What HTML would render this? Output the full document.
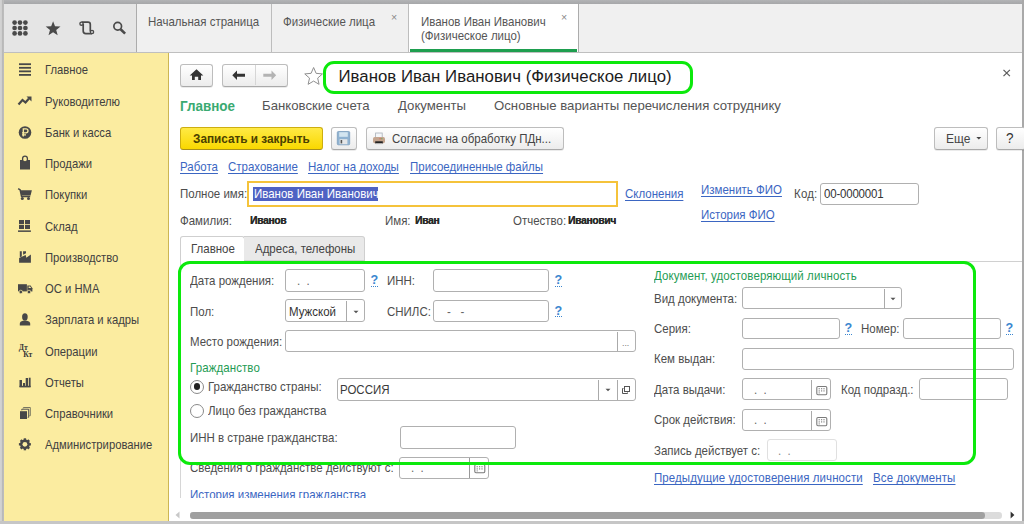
<!DOCTYPE html>
<html><head><meta charset="utf-8">
<style>
*{margin:0;padding:0;box-sizing:border-box}
html,body{width:1024px;height:524px;overflow:hidden;background:#b4b4b4;font-family:"Liberation Sans",sans-serif;color:#4d4d4d}
.a{position:absolute}
.t{position:absolute;white-space:nowrap;line-height:14px;font-size:11.9px;transform:scaleX(0.966);transform-origin:0 50%}
.sb{left:44.8px;color:#404040;font-size:12.1px;transform:scaleX(0.93)}
.btn{position:absolute;border:1px solid #bdbdbd;border-bottom-color:#a9a9a9;border-radius:3px;background:linear-gradient(#fff,#ececec);box-shadow:0 1px 0 rgba(0,0,0,0.08)}
.inp{position:absolute;border:1px solid #b0b0b0;border-radius:3px;background:#fff}
.nav{top:98.2px;font-size:13.2px;line-height:16px;color:#555;transform:none}
.lnk{color:#3b66c2;text-decoration:underline;text-underline-offset:1.6px}
.nm{top:213.3px;font-size:10.6px;font-weight:bold;color:#2a2a2a;letter-spacing:-0.3px;text-shadow:0.35px 0 0 #2a2a2a}
.q{color:#3b86cf;font-size:12.6px;font-weight:bold;line-height:14px;border-bottom:1px dotted #3b86cf;height:13.6px;transform:none}
#frame{position:absolute;left:3px;top:4px;width:1019px;height:517px;background:#fff;overflow:hidden}
</style></head><body>
<!-- outer borders -->
<div class="a" style="left:0;top:0;width:1024px;height:4px;background:linear-gradient(#b3b4b6,#a6a7a9)"></div>
<div class="a" style="left:0;top:0;width:4px;height:524px;background:linear-gradient(90deg,#d2d2d2 0,#d2d2d2 1.4px,#b9b9b9 2.2px,#b9b9b9 3.3px,#c4c4c4 4px)"></div>
<div class="a" style="left:1022px;top:0;width:2px;height:524px;background:#a9a9a9"></div>
<div class="a" style="left:0;top:521px;width:1024px;height:3px;background:#c6c6c6"></div>

<!-- header -->
<div class="a" style="left:4px;top:4px;width:133px;height:49px;background:#e5e5e5"></div>
<div class="a" style="left:136px;top:4px;width:1px;height:49px;background:#acacac"></div>
<div class="a" style="left:137px;top:4px;width:885px;height:49px;background:#f0f0f0"></div>
<div class="a" style="left:271px;top:4px;width:1px;height:49px;background:#bdbdbd"></div>
<div class="a" style="left:408px;top:4px;width:171px;height:49px;background:#fff;border-left:1px solid #bdbdbd;border-right:1px solid #acacac"></div>
<div class="a" style="left:409.5px;top:49px;width:167px;height:3px;background:#1e9e4f"></div>
<div class="a" style="left:4px;top:52px;width:1018px;height:1.3px;background:#bfbfbf"></div>

<div class="t" style="left:148px;top:15px;color:#555">Начальная страница</div>
<div class="t" style="left:283px;top:15px;color:#555">Физические лица</div>
<div class="t" style="left:391px;top:10px;color:#888;font-size:11px">×</div>
<div class="t" style="left:421px;top:15px;color:#555">Иванов Иван Иванович</div>
<div class="t" style="left:421px;top:29px;color:#555">(Физическое лицо)</div>
<div class="t" style="left:561px;top:10px;color:#888;font-size:11px">×</div>

<!-- sidebar -->
<div class="a" style="left:4px;top:53px;width:164px;height:468px;background:#fbeca0"></div>
<div class="a" style="left:168px;top:53px;width:1px;height:468px;background:#cdb653"></div>


<div class="t sb" style="top:63.40px">Главное</div>
<div class="t sb" style="top:94.65px">Руководителю</div>
<div class="t sb" style="top:125.90px">Банк и касса</div>
<div class="t sb" style="top:157.15px">Продажи</div>
<div class="t sb" style="top:188.40px">Покупки</div>
<div class="t sb" style="top:219.65px">Склад</div>
<div class="t sb" style="top:250.90px">Производство</div>
<div class="t sb" style="top:282.15px">ОС и НМА</div>
<div class="t sb" style="top:313.40px">Зарплата и кадры</div>
<div class="t sb" style="top:344.65px">Операции</div>
<div class="t sb" style="top:375.90px">Отчеты</div>
<div class="t sb" style="top:407.15px">Справочники</div>
<div class="t sb" style="top:438.40px">Администрирование</div>
<svg class="a" style="left:0;top:0" width="170" height="524" fill="#484848">
 <!-- hamburger -->
 <rect x="19" y="63.3" width="12" height="1.8"/><rect x="19" y="66.9" width="12" height="1.8"/><rect x="19" y="70.45" width="12" height="1.8"/><rect x="19" y="74" width="12" height="1.8"/>
 <!-- trend -->
 <path d="M18.5 104.5 L22.5 100 L25.5 102.5 L29 98.5" stroke="#484848" stroke-width="2.2" fill="none"/><path d="M26.5 96.5 L31.5 96.5 L31.5 101.5 Z"/>
 <!-- ruble -->
 <circle cx="25" cy="132.5" r="6.3"/>
 <path d="M23.3 136.5 V128.8 H26 A2 2 0 0 1 26 132.8 H22 M22 134.8 H26" stroke="#fbeca0" stroke-width="1.3" fill="none"/>
 <!-- bag -->
 <path d="M20 160 H22.4 L25 161.3 L27.6 160 H30 V169.4 H20 Z"/><path d="M22.6 161 V158.6 A2.4 2.4 0 0 1 27.4 158.6 V161" stroke="#484848" stroke-width="1.3" fill="none"/>
 <!-- cart -->
 <path d="M18.2 188.6 L20.2 190 L21.6 196.6 H30.2" stroke="#484848" stroke-width="1.5" fill="none"/><path d="M20.3 190.2 H31.9 L30.6 195.6 H21.3 Z"/><circle cx="22.3" cy="198.6" r="1.5"/><circle cx="28.5" cy="198.6" r="1.5"/>
 <!-- warehouse -->
 <rect x="19" y="220" width="5" height="4.2"/><rect x="25" y="220" width="5" height="4.2"/><rect x="19" y="225" width="5" height="4"/><rect x="25" y="225" width="5" height="4"/><rect x="18" y="230.4" width="12.9" height="1.5"/>
 <!-- factory -->
 <path d="M19.1 262.8 V258 L25.7 255 L26.3 257.8 L30.9 254.6 V262.8 Z"/><path d="M19.8 251.3 H21.8 V256.4 L19.8 257.3 Z"/><path d="M23.1 251.3 H26 V253.2 L23.1 254.7 Z"/>
 <!-- truck -->
 <path d="M18 284.2 H26.9 V291.4 H18 Z"/><path d="M27.3 285.4 H30.6 L32.4 288.2 V291.4 H27.3 Z"/><path d="M28.6 286.4 H30.1 L31.2 288 H28.6 Z" fill="#fbeca0"/><circle cx="20.8" cy="292" r="1.8" stroke="#fbeca0" stroke-width="0.7"/><circle cx="29" cy="292" r="1.8" stroke="#fbeca0" stroke-width="0.7"/>
 <!-- person -->
 <ellipse cx="24.9" cy="317" rx="2.8" ry="3.7"/><path d="M19.8 325.6 V323.8 Q19.8 321.2 23 320.7 H26.8 Q30.2 321.2 30.2 323.8 V325.6 Z"/>
 <!-- Dt Kt -->
 <text x="18.8" y="350.4" font-family="Liberation Serif" font-size="7.6" font-weight="bold" fill="#383838">Дт</text><text x="23.3" y="357" font-family="Liberation Serif" font-size="7.6" font-weight="bold" fill="#383838">Кт</text>
 <!-- reports -->
 <rect x="19.5" y="380" width="2.5" height="7"/><rect x="23" y="383" width="2" height="4"/><rect x="25.7" y="378" width="2.3" height="9"/><rect x="28.8" y="377.7" width="1.8" height="9.3"/><rect x="19.5" y="385.8" width="11.1" height="1.6"/>
 <!-- catalog -->
 <rect x="20" y="411.2" width="7" height="7.8"/><path d="M21.8 410.3 V409.2 H28.7 V417.3 H27.7" stroke="#505050" stroke-width="1" fill="none"/><path d="M23.4 408.3 V407.5 H30.3 V415.7 H29.4" stroke="#6a6a5a" stroke-width="0.9" fill="none"/>
 <!-- gear -->
 <g transform="translate(24.9 444.3)"><circle r="3.7" fill="none" stroke="#484848" stroke-width="2.4"/>
 <rect x="-1.2" y="-6" width="2.4" height="12"/><rect x="-1.2" y="-6" width="2.4" height="12" transform="rotate(45)"/><rect x="-1.2" y="-6" width="2.4" height="12" transform="rotate(90)"/><rect x="-1.2" y="-6" width="2.4" height="12" transform="rotate(135)"/>
 <circle r="2.4" fill="#fbeca0"/></g>
</svg>

<!-- header icons -->
<svg class="a" style="left:0;top:0" width="140" height="52" fill="#4a4a4a">
 <g><circle cx="14.6" cy="22.6" r="2.35"/><circle cx="20" cy="22.6" r="2.35"/><circle cx="25.4" cy="22.6" r="2.35"/>
 <circle cx="14.6" cy="28" r="2.35"/><circle cx="20" cy="28" r="2.35"/><circle cx="25.4" cy="28" r="2.35"/>
 <circle cx="14.6" cy="33.4" r="2.35"/><circle cx="20" cy="33.4" r="2.35"/><circle cx="25.4" cy="33.4" r="2.35"/></g>
 <path d="M53.10 21.20 L55.03 26.35 L60.52 26.59 L56.22 30.01 L57.68 35.31 L53.10 32.28 L48.52 35.31 L49.98 30.01 L45.68 26.59 L51.17 26.35 Z"/>
 <path d="M81.5 22.1 H88 Q90.3 22.1 90.3 24.4 V31.5" stroke="#4a4a4a" stroke-width="1.7" fill="none"/>
 <path d="M83.2 23.7 V31 Q83.2 33.6 85.8 33.6 H92" stroke="#4a4a4a" stroke-width="1.7" fill="none"/>
 <circle cx="81.5" cy="23.7" r="1.6" fill="#e5e5e5" stroke="#4a4a4a" stroke-width="1.4"/>
 <circle cx="92" cy="32" r="1.6" fill="#e5e5e5" stroke="#4a4a4a" stroke-width="1.4"/>
 <circle cx="117.7" cy="26.3" r="3.85" fill="none" stroke="#4a4a4a" stroke-width="1.7"/><path d="M120.6 29.3 L125.1 33.6" stroke="#4a4a4a" stroke-width="2.6"/>
</svg>

<!-- content -->
<div class="a" style="left:169px;top:53px;width:853px;height:468px;background:#fff"></div>


<!-- top toolbar -->
<div class="btn" style="left:180px;top:64px;width:33px;height:22.5px"></div>
<div class="btn" style="left:222px;top:64px;width:66px;height:22.5px"></div>
<div class="a" style="left:255px;top:65px;width:1px;height:20px;background:#d6d6d6"></div>
<svg class="a" style="left:170px;top:55px" width="130" height="40">
 <path d="M26.5 14.3 L33.3 20.5 H31 V25 H28.2 V21.8 H24.8 V25 H22 V20.5 H19.7 Z" fill="#333"/>
 <path d="M62.3 20.3 L67 15.5 V18.8 H75 V21.8 H67 V25.1 Z" fill="#333"/>
 <path d="M106.2 20.3 L101.5 15.5 V18.8 H93.3 V21.8 H101.5 V25.1 Z" fill="#b3b3b3"/>
 <path d="M143.5 12.3" fill="none"/>
</svg>
<svg class="a" style="left:302px;top:64px" width="24" height="24"><path d="M11.60 3.50 L14.11 9.34 L20.44 9.93 L15.67 14.12 L17.07 20.32 L11.60 17.08 L6.13 20.32 L7.53 14.12 L2.76 9.93 L9.09 9.34 Z" fill="#fff" stroke="#8f8f8f" stroke-width="1" stroke-linejoin="round"/></svg>

<div class="t" style="left:338.5px;top:66.8px;font-size:16.8px;line-height:20px;color:#1c1c1c;transform:none;letter-spacing:0.02px">Иванов Иван Иванович (Физическое лицо)</div>
<svg class="a" style="left:1000px;top:66px" width="14" height="14"><path d="M3.5 3.8 L9.9 10.2 M9.9 3.8 L3.5 10.2" stroke="#5a5a5a" stroke-width="1.2"/></svg>

<!-- form nav -->
<div class="t" style="left:180px;top:97.7px;font-size:14px;line-height:16px;font-weight:bold;color:#3aaa72;transform:scaleX(0.96)">Главное</div>
<div class="t nav" style="left:262px">Банковские счета</div>
<div class="t nav" style="left:398px">Документы</div>
<div class="t nav" style="left:494px">Основные варианты перечисления сотруднику</div>

<!-- command bar -->
<div class="a" style="left:180px;top:127px;width:143px;height:23px;border:1px solid #cdae10;border-bottom-color:#a8901a;border-radius:3px;background:linear-gradient(#ffea45,#f9d800)"></div>
<div class="t" style="left:192.5px;top:131.5px;font-size:12.2px;font-weight:bold;color:#4a4000">Записать и закрыть</div>
<div class="btn" style="left:331px;top:127px;width:26px;height:23px"></div>
<svg class="a" style="left:331px;top:127px" width="26" height="23">
 <rect x="6.3" y="4.5" width="12.4" height="13.3" rx="1" fill="#8fb2d1" stroke="#7b9dbd" stroke-width="0.8"/>
 <rect x="8.2" y="5.2" width="8.6" height="4.6" fill="#d3e5f0"/>
 <rect x="8.6" y="12.2" width="7.8" height="5" fill="#e4e6e8"/><rect x="9.6" y="13" width="1.6" height="3.4" fill="#555"/>
</svg>
<div class="btn" style="left:366px;top:127px;width:198px;height:23px"></div>
<svg class="a" style="left:366px;top:127px" width="26" height="23">
 <rect x="9.6" y="6" width="6.6" height="4.5" fill="#f4f6f8" stroke="#a8b0b8" stroke-width="0.8"/>
 <rect x="7" y="10" width="12" height="6.3" rx="1.8" fill="#c4a58f"/>
 <rect x="13.5" y="11.3" width="1.2" height="0.9" fill="#e05050"/><rect x="15.2" y="11.3" width="1.2" height="0.9" fill="#50b050"/>
 <rect x="9.2" y="14.3" width="7.6" height="2.2" fill="#222"/>
 <rect x="9.6" y="16.5" width="6.6" height="1" fill="#ddd"/>
</svg>
<div class="t" style="left:392px;top:132px;color:#444">Согласие на обработку ПДн...</div>
<div class="btn" style="left:934px;top:127px;width:54px;height:23px"></div>
<div class="t" style="left:946px;top:131.5px;font-size:12.4px;color:#444">Еще</div>
<svg class="a" style="left:975px;top:135px" width="8" height="6"><path d="M1.3 2 H6.3 L3.8 4.6 Z" fill="#444"/></svg>
<div class="btn" style="left:996px;top:127px;width:30px;height:23px"></div>
<div class="t" style="left:1005.5px;top:131px;font-size:14px;color:#333">?</div>

<!-- links -->
<div class="t lnk" style="left:180px;top:160px">Работа</div>
<div class="t lnk" style="left:228px;top:160px">Страхование</div>
<div class="t lnk" style="left:307.5px;top:160px">Налог на доходы</div>
<div class="t lnk" style="left:410px;top:160px">Присоединенные файлы</div>

<div class="t" style="left:180px;top:187px">Полное имя:</div>
<div class="a" style="left:247px;top:181px;width:371px;height:26px;border:2px solid #f5c33b;background:#fff"></div>
<div class="a" style="left:253px;top:186.5px;width:125px;height:14px;background:#4f62c3"></div>
<div class="t" style="left:253.5px;top:187px;color:#fff">Иванов Иван Иванович</div>
<div class="t lnk" style="left:624.5px;top:186.7px">Склонения</div>
<div class="t lnk" style="left:701px;top:183px">Изменить ФИО</div>
<div class="t lnk" style="left:701px;top:208px">История ФИО</div>
<div class="t" style="left:793.5px;top:187.4px;letter-spacing:0.2px">Код:</div>
<div class="inp" style="left:820px;top:183px;width:99px;height:22px"></div>
<div class="t" style="left:824px;top:187.4px;color:#333;letter-spacing:-0.2px">00-0000001</div>

<div class="t" style="left:180px;top:214px">Фамилия:</div>
<div class="t nm" style="left:250px">Иванов</div>
<div class="t" style="left:385px;top:214px">Имя:</div>
<div class="t nm" style="left:414.5px">Иван</div>
<div class="t" style="left:512.5px;top:214px">Отчество:</div>
<div class="t nm" style="left:568px">Иванович</div>

<!-- tabs -->
<div class="a" style="left:180px;top:261px;width:842px;height:1px;background:#d0d0d0"></div>
<div class="a" style="left:180px;top:236px;width:65px;height:26px;border:1px solid #cfcfcf;border-bottom:none;border-radius:3px 3px 0 0;background:#fff"></div>
<div class="a" style="left:244px;top:236px;width:121px;height:25px;border:1px solid #cfcfcf;border-left:none;border-radius:0 3px 0 0;background:#e9e9e9"></div>
<div class="t" style="left:190.5px;top:241.5px;font-size:11.9px;color:#444">Главное</div>
<div class="t" style="left:255px;top:241.5px;font-size:11.9px;color:#444">Адреса, телефоны</div>
<div class="a" style="left:180px;top:261px;width:1px;height:237px;background:#d6d6d6"></div>

<div class="a" style="left:169px;top:53px;width:853px;height:445px;overflow:hidden">
<div class="a" style="left:-169px;top:-53px;width:1024px;height:524px">

<div class="t" style="left:189.5px;top:273.6px;">Дата рождения:</div>
<div class="inp" style="left:285px;top:269.3px;width:80px;height:22.7px;"></div>
<div class="t" style="left:297px;top:273.6px;color:#666">.&nbsp;&nbsp;.</div>
<div class="t q" style="left:370.5px;top:273.0px">?</div>
<div class="t" style="left:387px;top:273.6px;">ИНН:</div>
<div class="inp" style="left:433px;top:269.3px;width:116px;height:22.7px;"></div>
<div class="t q" style="left:554.5px;top:273.0px">?</div>
<div class="t" style="left:189.5px;top:304.6px;">Пол:</div>
<div class="inp" style="left:285px;top:299.3px;width:80px;height:22.7px;"></div>
<div class="a" style="left:346px;top:301px;width:1px;height:20px;background:#aaa"></div>
<svg class="a" style="left:351.5px;top:308.5px" width="8" height="6"><path d="M1.5 1.8 H6.5 L4 4.3 Z" fill="#555"/></svg>
<div class="t" style="left:289px;top:304.6px;color:#333">Мужской</div>
<div class="t" style="left:387px;top:304.6px;">СНИЛС:</div>
<div class="inp" style="left:433px;top:299.8px;width:116px;height:22.2px;"></div>
<div class="t" style="left:447px;top:304.6px;color:#666">-&nbsp;&nbsp;&nbsp;-</div>
<div class="t q" style="left:554.5px;top:303.5px">?</div>
<div class="t" style="left:189.5px;top:334.7px;">Место рождения:</div>
<div class="inp" style="left:285px;top:329.8px;width:351px;height:22.2px;"></div>
<div class="a" style="left:617px;top:331.5px;width:1px;height:19.5px;background:#aaa"></div>
<div class="t" style="left:622px;top:336.0px;color:#777;font-size:9px">...</div>
<div class="t" style="left:189.5px;top:361px;color:#1f9c55;letter-spacing:0.1px">Гражданство</div>
<div class="a" style="left:190px;top:379.8px;width:14px;height:14px;border:1px solid #8a8a8a;border-radius:50%;background:#fff"></div>
<div class="a" style="left:193.6px;top:383.4px;width:6.8px;height:6.8px;border-radius:50%;background:#222"></div>
<div class="t" style="left:208.3px;top:380.0px;">Гражданство страны:</div>
<div class="inp" style="left:337px;top:378.3px;width:299px;height:22.7px;"></div>
<div class="a" style="left:598px;top:380px;width:1px;height:20px;background:#aaa"></div>
<div class="a" style="left:617px;top:380px;width:1px;height:20px;background:#aaa"></div>
<svg class="a" style="left:603.5px;top:386.5px" width="8" height="6"><path d="M1.5 1.8 H6.5 L4 4.3 Z" fill="#555"/></svg>
<svg class="a" style="left:617px;top:379px" width="19" height="22"><rect x="7.5" y="7.5" width="5" height="5" fill="none" stroke="#555" stroke-width="1"/><path d="M6.5 9.5 H5.5 V14.5 H10.5 V13.5" fill="none" stroke="#555" stroke-width="1"/></svg>
<div class="t" style="left:340.3px;top:382.5px;color:#3a3a3a;font-size:11.9px">РОССИЯ</div>
<div class="a" style="left:190px;top:403.6px;width:14px;height:14px;border:1px solid #8a8a8a;border-radius:50%;background:#fff"></div>
<div class="t" style="left:208.3px;top:403.5px;">Лицо без гражданства</div>
<div class="t" style="left:189.5px;top:431.0px;">ИНН в стране гражданства:</div>
<div class="inp" style="left:399.5px;top:426.3px;width:116.5px;height:22.7px;"></div>
<div class="t" style="left:189.8px;top:461.0px;">Сведения о гражданстве действуют с:</div>
<div class="inp" style="left:399px;top:456.8px;width:90px;height:22.2px;"></div>
<div class="a" style="left:469px;top:458px;width:1px;height:20px;background:#999"></div>
<svg class="a" style="left:469.5px;top:457.3px" width="19" height="21"><rect x="4.8" y="7.5" width="10" height="8.2" rx="1.2" fill="#fff" stroke="#7a7a7a" stroke-width="1.1"/><g fill="#888" transform="translate(-0.6 -0.6)"><rect x="7.2" y="9.7" width="1.2" height="1.2"/><rect x="9.6" y="9.7" width="1.2" height="1.2"/><rect x="12" y="9.7" width="1.2" height="1.2"/><rect x="7.2" y="11.9" width="1.2" height="1.2"/><rect x="9.6" y="11.9" width="1.2" height="1.2"/><rect x="12" y="11.9" width="1.2" height="1.2"/><rect x="7.2" y="14" width="1.2" height="1"/></g></svg>
<div class="t" style="left:411px;top:461.0px;color:#666">.&nbsp;&nbsp;.</div>
<div class="t lnk" style="left:189.8px;top:487.7px;">История изменения гражданства</div>
<div class="t" style="left:654.2px;top:269.3px;color:#1f9c55;letter-spacing:0.1px">Документ, удостоверяющий личность</div>
<div class="t" style="left:654.2px;top:292.0px;">Вид документа:</div>
<div class="inp" style="left:742px;top:287.3px;width:160px;height:22.2px;"></div>
<div class="a" style="left:883.5px;top:289px;width:1px;height:19.5px;background:#aaa"></div>
<svg class="a" style="left:889px;top:296px" width="8" height="6"><path d="M1.5 1.8 H6.5 L4 4.3 Z" fill="#555"/></svg>
<div class="t" style="left:654.2px;top:322.0px;">Серия:</div>
<div class="inp" style="left:742px;top:317.8px;width:98px;height:21.7px;"></div>
<div class="t q" style="left:844.5px;top:321.0px">?</div>
<div class="t" style="left:861px;top:322.0px;">Номер:</div>
<div class="inp" style="left:902.5px;top:317.8px;width:98.5px;height:21.7px;"></div>
<div class="t q" style="left:1005.5px;top:321.0px">?</div>
<div class="t" style="left:654.2px;top:352.4px;">Кем выдан:</div>
<div class="inp" style="left:742px;top:347.8px;width:271.5px;height:22.2px;"></div>
<div class="t" style="left:654.2px;top:383.2px;">Дата выдачи:</div>
<div class="inp" style="left:742px;top:377.8px;width:89px;height:22.2px;"></div>
<div class="a" style="left:811px;top:379.5px;width:1px;height:19.5px;background:#aaa"></div>
<svg class="a" style="left:811.5px;top:378.5px" width="19" height="21"><rect x="4.8" y="7.5" width="10" height="8.2" rx="1.2" fill="#fff" stroke="#7a7a7a" stroke-width="1.1"/><g fill="#888" transform="translate(-0.6 -0.6)"><rect x="7.2" y="9.7" width="1.2" height="1.2"/><rect x="9.6" y="9.7" width="1.2" height="1.2"/><rect x="12" y="9.7" width="1.2" height="1.2"/><rect x="7.2" y="11.9" width="1.2" height="1.2"/><rect x="9.6" y="11.9" width="1.2" height="1.2"/><rect x="12" y="11.9" width="1.2" height="1.2"/><rect x="7.2" y="14" width="1.2" height="1"/></g></svg>
<div class="t" style="left:754px;top:382.5px;color:#666">.&nbsp;&nbsp;.</div>
<div class="t" style="left:840.5px;top:383.2px;">Код подразд.:</div>
<div class="inp" style="left:919px;top:377.8px;width:89px;height:22.2px;"></div>
<div class="t" style="left:654.2px;top:413.0px;">Срок действия:</div>
<div class="inp" style="left:742px;top:408.8px;width:89px;height:22.2px;"></div>
<div class="a" style="left:811px;top:410.5px;width:1px;height:19.5px;background:#aaa"></div>
<svg class="a" style="left:811.5px;top:409.5px" width="19" height="21"><rect x="4.8" y="7.5" width="10" height="8.2" rx="1.2" fill="#fff" stroke="#7a7a7a" stroke-width="1.1"/><g fill="#888" transform="translate(-0.6 -0.6)"><rect x="7.2" y="9.7" width="1.2" height="1.2"/><rect x="9.6" y="9.7" width="1.2" height="1.2"/><rect x="12" y="9.7" width="1.2" height="1.2"/><rect x="7.2" y="11.9" width="1.2" height="1.2"/><rect x="9.6" y="11.9" width="1.2" height="1.2"/><rect x="12" y="11.9" width="1.2" height="1.2"/><rect x="7.2" y="14" width="1.2" height="1"/></g></svg>
<div class="t" style="left:754px;top:413.0px;color:#666">.&nbsp;&nbsp;.</div>
<div class="t" style="left:654.2px;top:443.9px;">Запись действует с:</div>
<div class="inp" style="left:766.5px;top:439.3px;width:70.5px;height:21.7px;border-color:#e0e0e0"></div>
<div class="t" style="left:778px;top:443.6px;color:#888">.&nbsp;&nbsp;.</div>
<div class="t lnk" style="letter-spacing:0.09px;left:654.2px;top:471.0px;">Предыдущие удостоверения личности</div>
<div class="t lnk" style="letter-spacing:0.12px;left:873px;top:471.0px;">Все документы</div>
</div></div>
<svg class="a" style="left:172px;top:510px" width="10" height="10"><path d="M7.5 1.5 V8.5 L3.5 5 Z" fill="#c8c8c8"/></svg>
<div class="a" style="left:190px;top:512px;width:811.5px;height:6.5px;border-radius:3.25px;background:#dcdcdc"></div>
<div class="a" style="left:190px;top:512px;width:794.5px;height:6.5px;border-radius:3.25px;background:#a0a0a0"></div>
<svg class="a" style="left:1007px;top:510px" width="10" height="10"><path d="M3.6 1.5 V8.5 L7.4 5 Z" fill="#333"/></svg>
<!-- annotation boxes -->
<div class="a" style="left:323px;top:61.3px;width:370.2px;height:33.1px;border:3px solid #0ce90c;border-radius:11px"></div>
<div class="a" style="left:177.7px;top:261px;width:798.3px;height:203.8px;border:3px solid #0ce90c;border-radius:12px"></div>
</body></html>
